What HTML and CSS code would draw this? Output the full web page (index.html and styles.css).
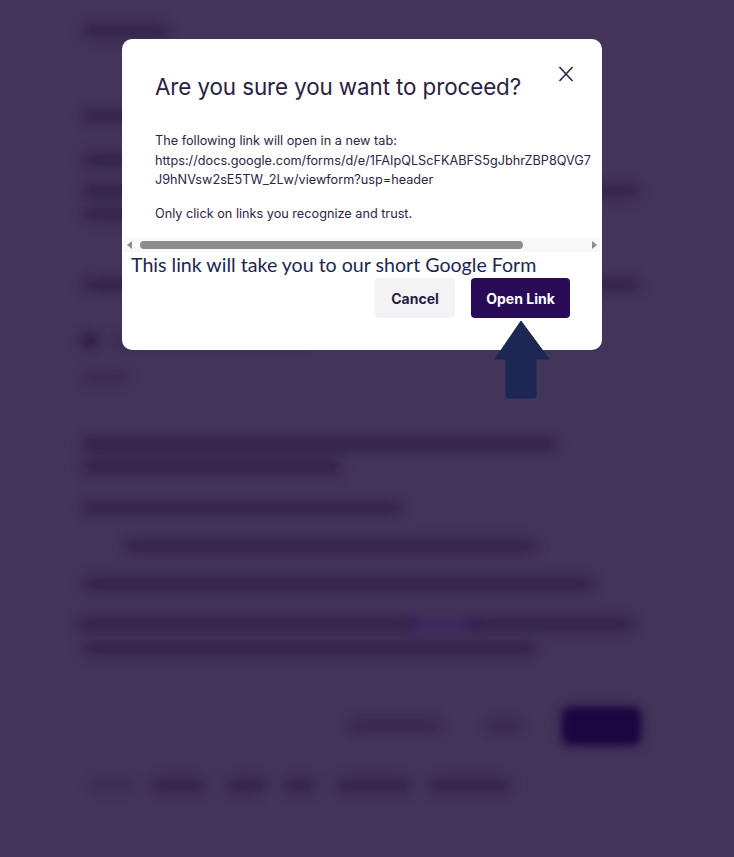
FILE: index.html
```html
<!DOCTYPE html>
<html lang="en">
<head>
<meta charset="utf-8">
<title>Are you sure you want to proceed?</title>
<link rel="stylesheet" href="styles.css">
</head>
<body>
<div class="page" aria-hidden="true">
  <div class="bg l1"></div>
  <div class="bg l2"></div>
  <div class="bg l3"></div>
  <div class="bg l4"></div>
  <div class="bg l5"></div>
  <div class="bg l6"></div>
  <div class="row l7"><span class="bg dot"></span><span class="bg seg"></span></div>
  <div class="bg l8"></div>
  <div class="bg l9"></div>
  <div class="bg l10"></div>
  <div class="bg l11"></div>
  <div class="bg l12"></div>
  <div class="bg l13"></div>
  <div class="row l14"><span class="bg s1"></span><span class="bg link"></span><span class="bg s2"></span></div>
  <div class="bg l15"></div>
  <div class="nav">
    <span class="bg prev"></span>
    <span class="bg next"></span>
    <span class="bg go"></span>
  </div>
  <div class="foot">
    <span class="bg f0"></span>
    <span class="bg f1"></span>
    <span class="bg f2"></span>
    <span class="bg f3"></span>
    <span class="bg f4"></span>
    <span class="bg f5"></span>
  </div>
</div>

<div class="overlay">
  <div class="modal" role="dialog" aria-labelledby="dlg-title">
    <div class="head">
      <h2 id="dlg-title" class="title">Are you sure you want to proceed?</h2>
      <button class="close" aria-label="Close">
        <svg width="16" height="16" viewBox="0 0 16 16"><path d="M1.5 1 L14.5 15 M14.5 1 L1.5 15" stroke="#34264f" stroke-width="1.7" fill="none"/></svg>
      </button>
    </div>
    <div class="scroller">
      <div class="content">
        <p class="msg">The following link will open in a new tab:<br>https://docs.google.com/forms/d/e/1FAIpQLScFKABFS5gJbhrZBP8QVG7<br>J9hNVsw2sE5TW_2Lw/viewform?usp=header</p>
        <p class="msg">Only click on links you recognize and trust.</p>
      </div>
    </div>
    <div class="hbar">
      <span class="tri tri-left"></span>
      <span class="track"><span class="thumb"></span></span>
      <span class="tri tri-right"></span>
    </div>
    <p class="note">This link will take you to our short Google Form</p>
    <div class="actions">
      <button class="btn btn-cancel">Cancel</button>
      <button class="btn btn-open">Open Link</button>
    </div>
  </div>
  <svg class="arrow" width="58" height="80" viewBox="0 0 58 80">
    <path d="M27 1 L55 39 L42 39 L42 76 Q42 78 40 78 L14 78 Q12 78 12 76 L12 39 L1 39 Z" fill="#1c2754" stroke="#1c2754" stroke-width="1" stroke-linejoin="round"/>
  </svg>
</div>
</body>
</html>
```

FILE: styles.css
```css
* { box-sizing: border-box; }
html, body { margin: 0; padding: 0; }
body {
  width: 734px;
  height: 857px;
  overflow: hidden;
  background: #43345a;
  font-family: Inter, "Noto Sans", sans-serif;
  position: relative;
}

/* blurred page behind the dialog */
.page {
  padding-left: 81px;
  filter: blur(3px);
  display: flex;
  flex-direction: column;
  align-items: flex-start;
}
.bg {
  --c: rgba(30, 12, 56, 0.42);
  display: block;
  position: relative;
  height: 12px;
}
.bg::before {
  content: "";
  position: absolute;
  left: 6px;
  right: 6px;
  top: 50%;
  height: 4px;
  margin-top: -2px;
  background: var(--c);
  box-shadow: 0 0 11px 4px var(--c);
  border-radius: 2px;
}
.l1 { margin-top: 25px; width: 90px; height: 12px; }
.l2 { margin-top: 71px; width: 420px; height: 16px; }
.l3 { margin-top: 29px; width: 470px; height: 14px; }
.l4 { margin-top: 18px; width: 560px; height: 12px; }
.l5 { margin-top: 11px; width: 400px; height: 12px; }
.l6 { margin-top: 58px; width: 560px; height: 14px; }
.row { display: flex; align-items: center; gap: 10px; }
.l7 { margin-top: 40px; height: 18px; }
.dot { width: 18px; height: 18px; --c: rgba(28, 10, 58, 0.55); }
.dot::before { left: 5px; right: 5px; height: 8px; margin-top: -4px; border-radius: 50%; }
.seg { width: 200px; height: 10px; --c: rgba(30, 12, 56, 0.18); }
.l8 { margin-top: 23px; width: 50px; height: 10px; --c: rgba(30, 12, 56, 0.2); }
.l9 { margin-top: 53px; width: 476px; height: 16px; }
.l10 { margin-top: 7px; width: 262px; height: 16px; }
.l9::before, .l10::before { height: 6px; margin-top: -3px; }
.l11 { margin-top: 26px; width: 323px; height: 13px; }
.l12 { margin-top: 25px; margin-left: 42px; width: 415px; height: 13px; }
.l13 { margin-top: 25px; width: 515px; height: 13px; }
.l14 { margin-top: 27px; gap: 0; height: 13px; }
.l14 .bg { height: 13px; }
.l14 .bg::before { left: 0; right: 0; }
.s1 { width: 331px; }
.link { width: 61px; --c: rgba(50, 20, 110, 0.4); }
.s2 { width: 157px; }
.l15 { margin-top: 11px; width: 457px; height: 13px; }
.nav {
  margin-top: 52px;
  width: 561px;
  display: flex;
  align-items: center;
  justify-content: flex-end;
}
.prev { width: 96px; height: 14px; --c: rgba(30, 12, 56, 0.32); }
.next { width: 38px; height: 14px; margin-left: 42px; --c: rgba(30, 12, 56, 0.3); }
.go { width: 81px; height: 40px; margin-left: 38px; --c: #1a0640; }
.go::before { left: 3px; right: 3px; height: 34px; margin-top: -17px; border-radius: 6px; box-shadow: 0 0 8px 2px var(--c); }
.foot {
  margin-top: 33px;
  display: flex;
  align-items: center;
}
.foot .bg { height: 12px; }
.f0 { margin-left: 6px; width: 50px; --c: rgba(30, 12, 56, 0.14); }
.f1 { margin-left: 13px; width: 57px; }
.f2 { margin-left: 18px; width: 42px; }
.f3 { margin-left: 15px; width: 34px; }
.f4 { margin-left: 19px; width: 77px; }
.f5 { margin-left: 15px; width: 85px; }

/* overlay + dialog */
.overlay {
  position: absolute;
  inset: 0;
  padding: 39px 0 0 122px;
}
.modal {
  width: 480px;
  height: 311px;
  background: #ffffff;
  border-radius: 10px;
  overflow: hidden;
  display: flex;
  flex-direction: column;
}
.head {
  display: flex;
  justify-content: space-between;
  align-items: flex-start;
  padding: 27px 28px 0 33px;
}
.title {
  margin: 6px 0 0;
  font-size: 22.4px;
  font-weight: 400;
  line-height: 30px;
  color: #2b1e45;
  letter-spacing: -0.1px;
}
.close {
  margin: 0;
  padding: 0;
  border: 0;
  background: transparent;
  width: 16px;
  height: 16px;
  display: flex;
}
.scroller {
  overflow: hidden;
  margin-top: 29px;
}
.content {
  width: 620px;
  padding-left: 33px;
}
.msg {
  margin: 0 0 14px;
  font-size: 12.7px;
  line-height: 19.5px;
  color: #2f2449;
  white-space: nowrap;
}
.msg + .msg { margin-bottom: 0; }
.hbar {
  margin: 15px 2px 0;
  height: 14px;
  background: #f8f8f8;
  display: flex;
  align-items: center;
}
.tri {
  width: 0;
  height: 0;
  border-top: 4px solid transparent;
  border-bottom: 4px solid transparent;
}
.tri-left { margin-left: 3px; border-right: 5px solid #8c8c8c; }
.tri-right { margin-right: 3px; border-left: 5px solid #8c8c8c; }
.track {
  flex: 1;
  display: flex;
  padding: 0 10px 0 8px;
}
.thumb {
  width: 383px;
  height: 8px;
  background: #8d8d8d;
  border-radius: 4px;
}
.note {
  margin: 0;
  padding-left: 9px;
  font-family: Lato, "Open Sans", sans-serif;
  font-size: 19.6px;
  line-height: 25px;
  color: #1c2754;
}
.actions {
  display: flex;
  justify-content: flex-end;
  gap: 16px;
  padding: 1px 32px 0 0;
}
.btn {
  height: 40px;
  border: 0;
  border-radius: 4px;
  font-family: Inter, "Noto Sans", sans-serif;
  font-size: 14px;
  font-weight: 700;
  padding: 0 8px;
}
.btn-cancel { width: 80px; background: #f3f3f5; color: #2a1d45; }
.btn-open { width: 99px; background: #290b58; color: #ffffff; }

.arrow {
  position: absolute;
  left: 494px;
  top: 320px;
}
```
